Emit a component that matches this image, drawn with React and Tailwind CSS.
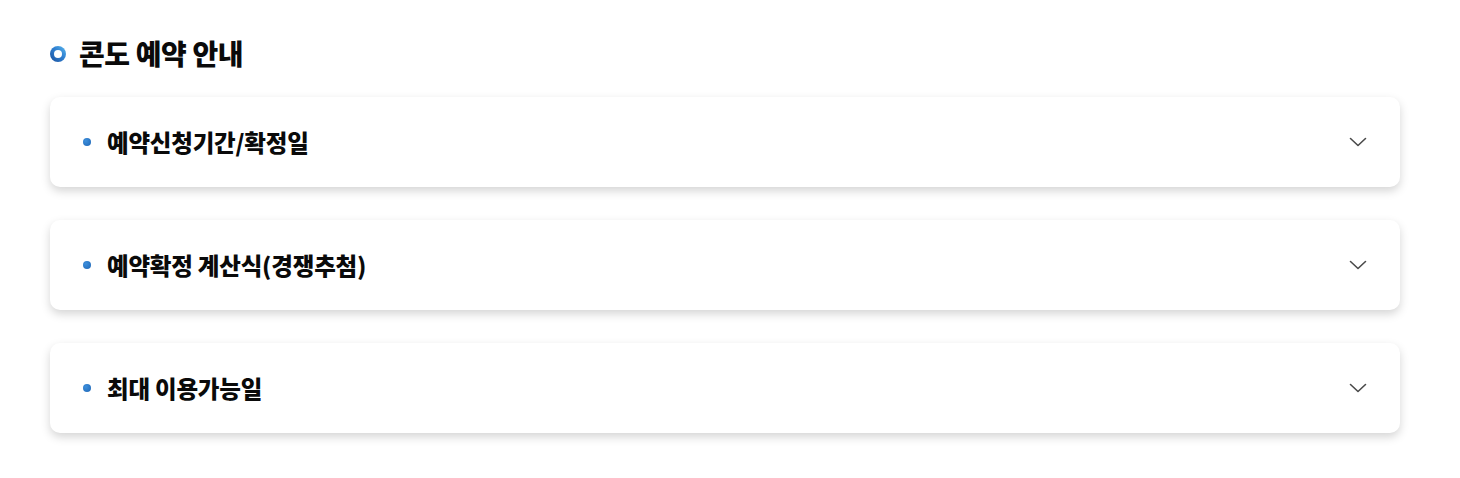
import React, { useState } from 'react';

const items = [
  '예약신청기간/확정일',
  '예약확정 계산식(경쟁추첨)',
  '최대 이용가능일',
];

function Chevron({ open }) {
  return (
    <svg
      width="18"
      height="10"
      viewBox="0 0 18 10"
      fill="none"
      className={open ? 'rotate-180' : ''}
    >
      <path d="M1.5 1.5L9 8.5L16.5 1.5" stroke="#4a4a4a" strokeWidth="1.6" strokeLinecap="round" strokeLinejoin="round" />
    </svg>
  );
}

function Item({ title }) {
  const [open, setOpen] = useState(false);
  return (
    <div className="bg-white rounded-[10px] shadow-[0_4px_10px_rgba(0,0,0,0.17)]">
      <button
        onClick={() => setOpen(!open)}
        className="w-full h-[90px] flex items-center pl-[33px] pr-[33px] text-left"
      >
        <span className="w-[8px] h-[8px] rounded-full bg-[radial-gradient(circle_at_35%_35%,#3d8fdc,#1f66b5)] mr-[16px] shrink-0" />
        <span className="flex-1 text-[23.5px] font-black text-[#0a0a0a] tracking-[-0.2px] leading-[30px]">{title}</span>
        <Chevron open={open} />
      </button>
    </div>
  );
}

export default function App() {
  return (
    <div className="bg-white min-h-[478px] pl-[50px] pr-[60px] pt-[34px] font-['Noto_Sans_CJK_KR',sans-serif]">
      {/* Section title */}
      <div className="flex items-center gap-[13px] mb-[24px]">
        <span className="w-[16px] h-[16px] rounded-full p-[4px] bg-[linear-gradient(45deg,#1a4f9c,#2f7fd0_55%,#5ab8ee)] shrink-0">
          <span className="block w-full h-full rounded-full bg-white" />
        </span>
        <h2 className="text-[28px] font-black text-[#0a0a0a] tracking-[-0.4px] leading-[39px]">콘도 예약 안내</h2>
      </div>

      <div className="flex flex-col gap-[33px]">
        {items.map((t) => (
          <Item key={t} title={t} />
        ))}
      </div>
    </div>
  );
}
